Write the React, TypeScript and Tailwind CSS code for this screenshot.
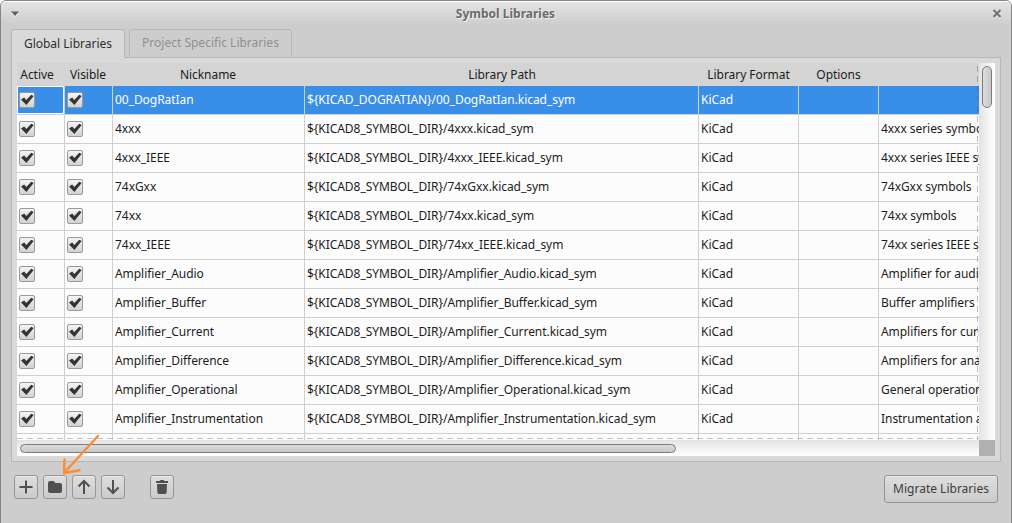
import React from "react";

type Row = { name: string; dir?: string; desc: string };

const rows: Row[] = [
  { name: "00_DogRatIan", dir: "KICAD_DOGRATIAN", desc: "" },
  { name: "4xxx", desc: "4xxx series symbols" },
  { name: "4xxx_IEEE", desc: "4xxx series IEEE symbols" },
  { name: "74xGxx", desc: "74xGxx symbols" },
  { name: "74xx", desc: "74xx symbols" },
  { name: "74xx_IEEE", desc: "74xx series IEEE symbols" },
  { name: "Amplifier_Audio", desc: "Amplifier for audio" },
  { name: "Amplifier_Buffer", desc: "Buffer amplifiers" },
  { name: "Amplifier_Current", desc: "Amplifiers for current" },
  { name: "Amplifier_Difference", desc: "Amplifiers for analog" },
  { name: "Amplifier_Operational", desc: "General operational" },
  { name: "Amplifier_Instrumentation", desc: "Instrumentation amplifiers" },
];

const columns = "grid grid-cols-[48px_48px_192px_394px_100px_80px_200px]";

function Check() {
  return (
    <span className="flex h-4 w-4 items-center justify-center rounded-[2px] border border-[#999] bg-linear-to-b from-[#f4f4f4] to-[#d2d2d2]">
      <svg width="14" height="14" viewBox="0 0 14 14" className="shrink-0">
        <path d="M1 6.4 L4.2 4.6 L6.3 7 L11.2 1.8 L13.7 3 L6.4 12 Z" fill="#343434" />
      </svg>
    </span>
  );
}

function Cell({ children, selected, focused }: { children?: React.ReactNode; selected?: boolean; focused?: boolean }) {
  return (
    <div
      className={
        "flex items-center overflow-hidden border-r border-b border-[#cfcfcf] pl-0.5 whitespace-nowrap " +
        (selected ? "bg-[#398ee7] text-white " : "bg-[#fcfcfc] ") +
        (focused ? "shadow-[inset_0_0_0_1px_#fff]" : "")
      }
    >
      {children}
    </div>
  );
}

function ToolButton({ children, className = "" }: { children: React.ReactNode; className?: string }) {
  return (
    <button
      className={
        "flex h-6 w-6 items-center justify-center rounded-[3px] border border-[#979797] bg-linear-to-b from-[#dedede] to-[#cbcbcb] shadow-[inset_0_1px_0_#eaeaea] " +
        className
      }
    >
      {children}
    </button>
  );
}

export default function App() {
  return (
    <div className="h-[523px] w-[1012px] overflow-hidden bg-white font-['Noto_Sans',sans-serif] text-[12px] leading-4 text-[#1c1c1c]">
      <div className="relative flex h-[530px] w-full flex-col rounded-t-[6px] border border-[#858585] bg-[#cdcdcd]">
        <header className="flex h-6 shrink-0 items-center rounded-t-[5px] border-t border-white bg-linear-to-b from-[#e3e3e3] to-[#cdcdcd] pr-2 pl-[10px]">
          <svg width="8" height="6" viewBox="0 0 8 6">
            <path d="M0 2 H8 L4 6 Z" fill="#f0f0f0" />
            <path d="M0 0.5 H8 L4 5 Z" fill="#626262" />
          </svg>
          <h1 className="flex-1 text-center font-bold text-[#6b6b6b] [text-shadow:1px_1px_0_#f0f0f0]">Symbol Libraries</h1>
          <svg width="11" height="10" viewBox="0 0 11 10">
            <path d="M1.5 2 L8.5 9 M8.5 2 L1.5 9" stroke="#eee" strokeWidth="2" />
            <path d="M1.5 1 L8.5 8 M8.5 1 L1.5 8" stroke="#707070" strokeWidth="2" />
          </svg>
        </header>

        <nav className="z-10 -mb-px ml-[10px] flex h-[33px] shrink-0 items-end gap-1">
          <div className="flex h-[29px] w-[114px] items-center justify-center rounded-t-[3px] border border-b-0 border-[#b7b7b7] bg-[#d9d9d9] text-[#303030]">
            Global Libraries
          </div>
          <div className="flex h-[29px] w-[163px] items-center justify-center rounded-t-[3px] border border-[#b7b7b7] bg-[#cdcdcd] pb-0.5 text-[#909090]">
            Project Specific Libraries
          </div>
        </nav>

        <main className="mx-[10px] flex h-[405px] shrink-0 flex-col border border-[#b7b7b7] bg-[#d9d9d9] p-[5px]">
          <div className="grid h-[393px] grid-cols-[962px_16px] grid-rows-[377px_16px]">
            <div className="relative overflow-hidden bg-[#fcfcfc] tracking-[-0.05px]">
              <div className={columns + " h-[23px] items-center bg-[#d4d4d4] text-center"}>
                <span className="pr-2">Active</span>
                <span className="pr-[2px]">Visible</span>
                <span className="pr-[2px]">Nickname</span>
                <span>Library Path</span>
                <span className="pr-px">Library Format</span>
                <span className="pr-px">Options</span>
                <span />
              </div>
              {rows.map((row, i) => (
                <div key={row.name} className={columns + " h-[29px]"}>
                  <Cell selected={i === 0} focused={i === 0}><Check /></Cell>
                  <Cell selected={i === 0}><Check /></Cell>
                  <Cell selected={i === 0}>{row.name}</Cell>
                  <Cell selected={i === 0}>{"${" + (row.dir ?? "KICAD8_SYMBOL_DIR") + "}/" + row.name + ".kicad_sym"}</Cell>
                  <Cell selected={i === 0}>KiCad</Cell>
                  <Cell selected={i === 0} />
                  <Cell selected={i === 0}>{row.desc}</Cell>
                </div>
              ))}
              <div className={columns + " h-[29px]"}>
                <Cell /><Cell /><Cell /><Cell /><Cell /><Cell /><Cell />
              </div>
              <div className="absolute top-0 right-[1px] h-full w-px bg-[repeating-linear-gradient(to_bottom,transparent_0_3px,#55555560_3px_9px,transparent_9px_10px)]" />
              <div className="absolute bottom-[1px] left-0 h-px w-full bg-[repeating-linear-gradient(to_right,#55555555_0_6px,transparent_6px_10px)]" />
            </div>
            <div className="bg-linear-to-r from-[#e3e3e3] to-white px-[3px] pt-[3px]">
              <div className="h-[42px] w-[10px] rounded-full border border-[#7c7c7c] bg-linear-to-r from-[#dcdcdc] to-[#c8c8c8]" />
            </div>
            <div className="bg-linear-to-b from-[#e3e3e3] to-white pt-[4px] pl-[3px]">
              <div className="h-[9px] w-[656px] rounded-full border border-[#7c7c7c] bg-linear-to-b from-[#dcdcdc] to-[#c8c8c8]" />
            </div>
            <div className="bg-[#b0b0b0]" />
          </div>
        </main>

        <footer className="mr-[13px] ml-[13px] flex items-start pt-[13px]">
          <div className="flex gap-[5px]">
            <ToolButton>
              <svg width="16" height="16" viewBox="0 0 16 16" className="shrink-0">
                <path d="M8 1.5 V14.5 M1.5 8 H14.5" stroke="#505050" strokeWidth="2" />
              </svg>
            </ToolButton>
            <ToolButton>
              <svg width="16" height="16" viewBox="0 0 16 16" className="shrink-0">
                <path d="M1 4 Q1 2 3 2 H6.5 L8.5 4 H13 Q15 4 15 6 V12 Q15 14 13 14 H3 Q1 14 1 12 Z" fill="#505050" />
              </svg>
            </ToolButton>
            <ToolButton>
              <svg width="16" height="16" viewBox="0 0 16 16" className="shrink-0">
                <path d="M8 15 V2 M2.5 7.5 L8 2 L13.5 7.5" fill="none" stroke="#505050" strokeWidth="2" />
              </svg>
            </ToolButton>
            <ToolButton>
              <svg width="16" height="16" viewBox="0 0 16 16" className="shrink-0">
                <path d="M8 1 V14 M2.5 8.5 L8 14 L13.5 8.5" fill="none" stroke="#505050" strokeWidth="2" />
              </svg>
            </ToolButton>
            <ToolButton className="ml-5">
              <svg width="16" height="16" viewBox="0 0 16 16" className="shrink-0">
                <path d="M2 2 H5.5 L6.5 1 H9.5 L10.5 2 H14 V4 H2 Z M3 5 H13 L12.6 13.5 Q12.5 15 11 15 H5 Q3.5 15 3.4 13.5 Z" fill="#505050" />
              </svg>
            </ToolButton>
          </div>
          <button className="ml-auto h-7 w-[114px] rounded-[3px] border border-[#929292] bg-linear-to-b from-[#dedede] to-[#cbcbcb] text-[#3c3c3c] shadow-[inset_0_1px_0_#eaeaea]">
            Migrate Libraries
          </button>
        </footer>

        <svg width="42" height="44" viewBox="0 0 42 44" className="pointer-events-none absolute top-[432px] left-[59px]">
          <path d="M38 3 L4 40 M4.5 26.5 L4 40 L19.5 37.2" fill="none" stroke="#ff8c32" strokeWidth="2.4" strokeLinecap="round" strokeLinejoin="round" />
        </svg>
      </div>
    </div>
  );
}
